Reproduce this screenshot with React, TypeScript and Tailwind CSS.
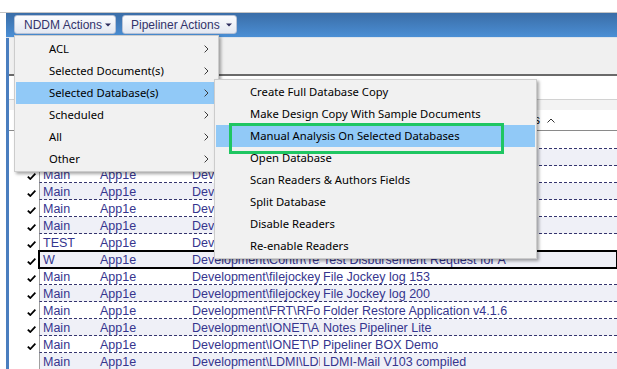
import React from "react";

type Row = { check: boolean; a: string; b: string; c: string; d: string };

const rows: Row[] = [
  { check: true, a: "Main", b: "App1e", c: "Development\\Admin\\Catalog", d: "Catalog Tools" },
  { check: true, a: "Main", b: "App1e", c: "Development\\Admin\\Config", d: "Config Manager" },
  { check: true, a: "Main", b: "App1e", c: "Development\\Admin\\Logs", d: "Log Analyzer" },
  { check: true, a: "Main", b: "App1e", c: "Development\\Apps\\Help", d: "Help Desk" },
  { check: true, a: "Main", b: "App1e", c: "Development\\Apps\\HR", d: "HR Requests" },
  { check: true, a: "Main", b: "App1e", c: "Development\\Apps\\Travel", d: "Travel Requests" },
  { check: true, a: "TEST", b: "App1e", c: "Development\\Contrib\\Test", d: "Test Approval Workflow" },
  { check: true, a: "W", b: "App1e", c: "Development\\Contri\\Test", d: "Test Disbursement Request for A" },
  { check: true, a: "Main", b: "App1e", c: "Development\\filejockey\\filejockey", d: "File Jockey log 153" },
  { check: true, a: "Main", b: "App1e", c: "Development\\filejockey\\filejockey", d: "File Jockey log 200" },
  { check: true, a: "Main", b: "App1e", c: "Development\\FRT\\RFolder", d: "Folder Restore Application v4.1.6" },
  { check: true, a: "Main", b: "App1e", c: "Development\\IONET\\Arc", d: "Notes Pipeliner Lite" },
  { check: true, a: "Main", b: "App1e", c: "Development\\IONET\\Pip", d: "Pipeliner BOX Demo" },
  { check: false, a: "Main", b: "App1e", c: "Development\\LDMI\\LDMI", d: "LDMI-Mail V103 compiled" },
];

const mainItems = ["ACL", "Selected Document(s)", "Selected Database(s)", "Scheduled", "All", "Other"];

const subItems = [
  "Create Full Database Copy",
  "Make Design Copy With Sample Documents",
  "Manual Analysis On Selected Databases",
  "Open Database",
  "Scan Readers & Authors Fields",
  "Split Database",
  "Disable Readers",
  "Re-enable Readers",
];

function Tri() {
  return (
    <svg width="6" height="4" viewBox="0 0 6 4" className="ml-auto shrink-0">
      <path d="M0 0.5 L6 0.5 L3 3.5 Z" fill="#2c2c5c" />
    </svg>
  );
}

function Chevron() {
  return (
    <svg width="5" height="8" viewBox="0 0 5 8" className="shrink-0">
      <path d="M0.6 0.6 L4 4 L0.6 7.4" fill="none" stroke="#3a3a3a" strokeWidth="1" />
    </svg>
  );
}

function Check() {
  return (
    <svg width="9" height="7" viewBox="0 0 9 7">
      <path d="M0.8 3.6 L3.3 6 L8.4 0.6" fill="none" stroke="#000" strokeWidth="1.8" />
    </svg>
  );
}

function GridRow({ row, index }: { row: Row; index: number }) {
  const selected = row.a === "W";
  return (
    <div className="flex h-[17px]">
      <div className="w-[30px] shrink-0 pl-[18px] pt-[7px]">{row.check ? <Check /> : null}</div>
      <div
        className={
          "flex flex-1 border-b border-l border-b-[#34346e] border-l-[#a0a0a0] border-dashed text-[12.5px] leading-[13px] text-[#35358e] " +
          (index % 2 === 1 ? "bg-[#eff0f7] " : "bg-white ") +
          (selected ? "relative z-10 outline-2 -outline-offset-1 outline-black" : "")
        }
        style={{ borderLeftStyle: "solid" }}
      >
        <div className="w-[57px] shrink-0 overflow-hidden whitespace-nowrap pl-[3px] pt-[3px]">{row.a}</div>
        <div className="w-[92px] shrink-0 overflow-hidden whitespace-nowrap pl-[3px] pt-[3px]">{row.b}</div>
        <div className="w-[131px] shrink-0 overflow-hidden whitespace-nowrap pl-[3px] pt-[3px]">{row.c}</div>
        <div className="flex-1 overflow-hidden whitespace-nowrap pl-[3px] pt-[3px]">{row.d}</div>
      </div>
    </div>
  );
}

export default function App() {
  return (
    <div className="relative flex h-[369px] w-[617px] flex-col overflow-hidden bg-white font-['Liberation_Sans',Arial,sans-serif]">
      <div className="h-[13px] shrink-0 border-b border-[#c4c4c4] bg-white" />
      <div className="ml-[6px] flex flex-1 flex-col">
        {/* blue title bar with action buttons */}
        <div className="flex h-[25px] shrink-0 items-start gap-[6px] border-b border-[#dde4ec] bg-linear-to-b from-[#3a6da7] to-[#4b8fd5] pl-[8px] pt-[2px]">
          <div className="flex h-[19px] w-[102px] items-center rounded-[3px] border border-[#b7c2d6] bg-linear-to-b from-[#fbfcfe] to-[#e4e8f1] pl-[9px] pr-[4px] text-[12px] text-[#33336a]">
            NDDM Actions
            <Tri />
          </div>
          <div className="flex h-[19px] w-[115px] items-center rounded-[3px] border border-[#b7c2d6] bg-linear-to-b from-[#fbfcfe] to-[#e4e8f1] pl-[8px] pr-[4px] text-[12px] text-[#33336a]">
            Pipeliner Actions
            <Tri />
          </div>
        </div>
        <div className="flex flex-1 flex-col border-l-[3px] border-[#4a7ebf]">
          <div className="h-[38px] shrink-0 border-b-2 border-[#6a6a6a] bg-[#f0f0f0]" />
          <div className="h-[24px] shrink-0 border-b border-[#d2d2d2] bg-white" />
          <div className="h-[10px] shrink-0 bg-[#f3f3f3]" />
          <div className="flex h-[21px] shrink-0 items-center border-b border-[#8a8a8a] bg-white text-[12px] text-black">
            <div className="w-[531px] text-right">Databases</div>
            <svg width="8" height="5" viewBox="0 0 8 5" className="ml-[7px]">
              <path d="M0.5 4.5 L4 1 L7.5 4.5" fill="none" stroke="#333" strokeWidth="1" />
            </svg>
          </div>
          <div className="h-[1px] shrink-0" />
          {rows.map((r, i) => (
            <GridRow key={i} row={r} index={i} />
          ))}
        </div>
      </div>

      {/* NDDM Actions dropdown */}
      <div className="absolute left-[14px] top-[35px] z-20 w-[205px] border border-[#cccccc] bg-[#f1f1f1] px-[1px] pb-[1px] pt-[2px] font-['Noto_Sans',sans-serif] text-[11.25px] text-black shadow-[2px_2px_3px_rgba(0,0,0,0.35)]">
        {mainItems.map((t, i) => (
          <div
            key={t}
            className={"flex h-[22px] items-center justify-between pl-[33px] pr-[8px] " + (i === 2 ? "bg-[#91c9f7]" : "")}
          >
            <span>{t}</span>
            <Chevron />
          </div>
        ))}
      </div>

      {/* Selected Database(s) submenu */}
      <div className="absolute left-[214px] top-[79px] z-20 w-[323px] border border-[#cccccc] bg-[#f1f1f1] p-[1px] font-['Noto_Sans',sans-serif] text-[11.25px] text-black shadow-[2px_2px_3px_rgba(0,0,0,0.35)]">
        {subItems.map((t, i) => (
          <div key={t} className={"flex h-[22px] items-center pl-[34px] " + (i === 2 ? "bg-[#91c9f7]" : "")}>
            {t}
          </div>
        ))}
      </div>

      {/* annotation box */}
      <div className="absolute left-[229px] top-[123px] z-30 h-[31px] w-[275px] border-[3px] border-[#1fc662]" />
    </div>
  );
}
